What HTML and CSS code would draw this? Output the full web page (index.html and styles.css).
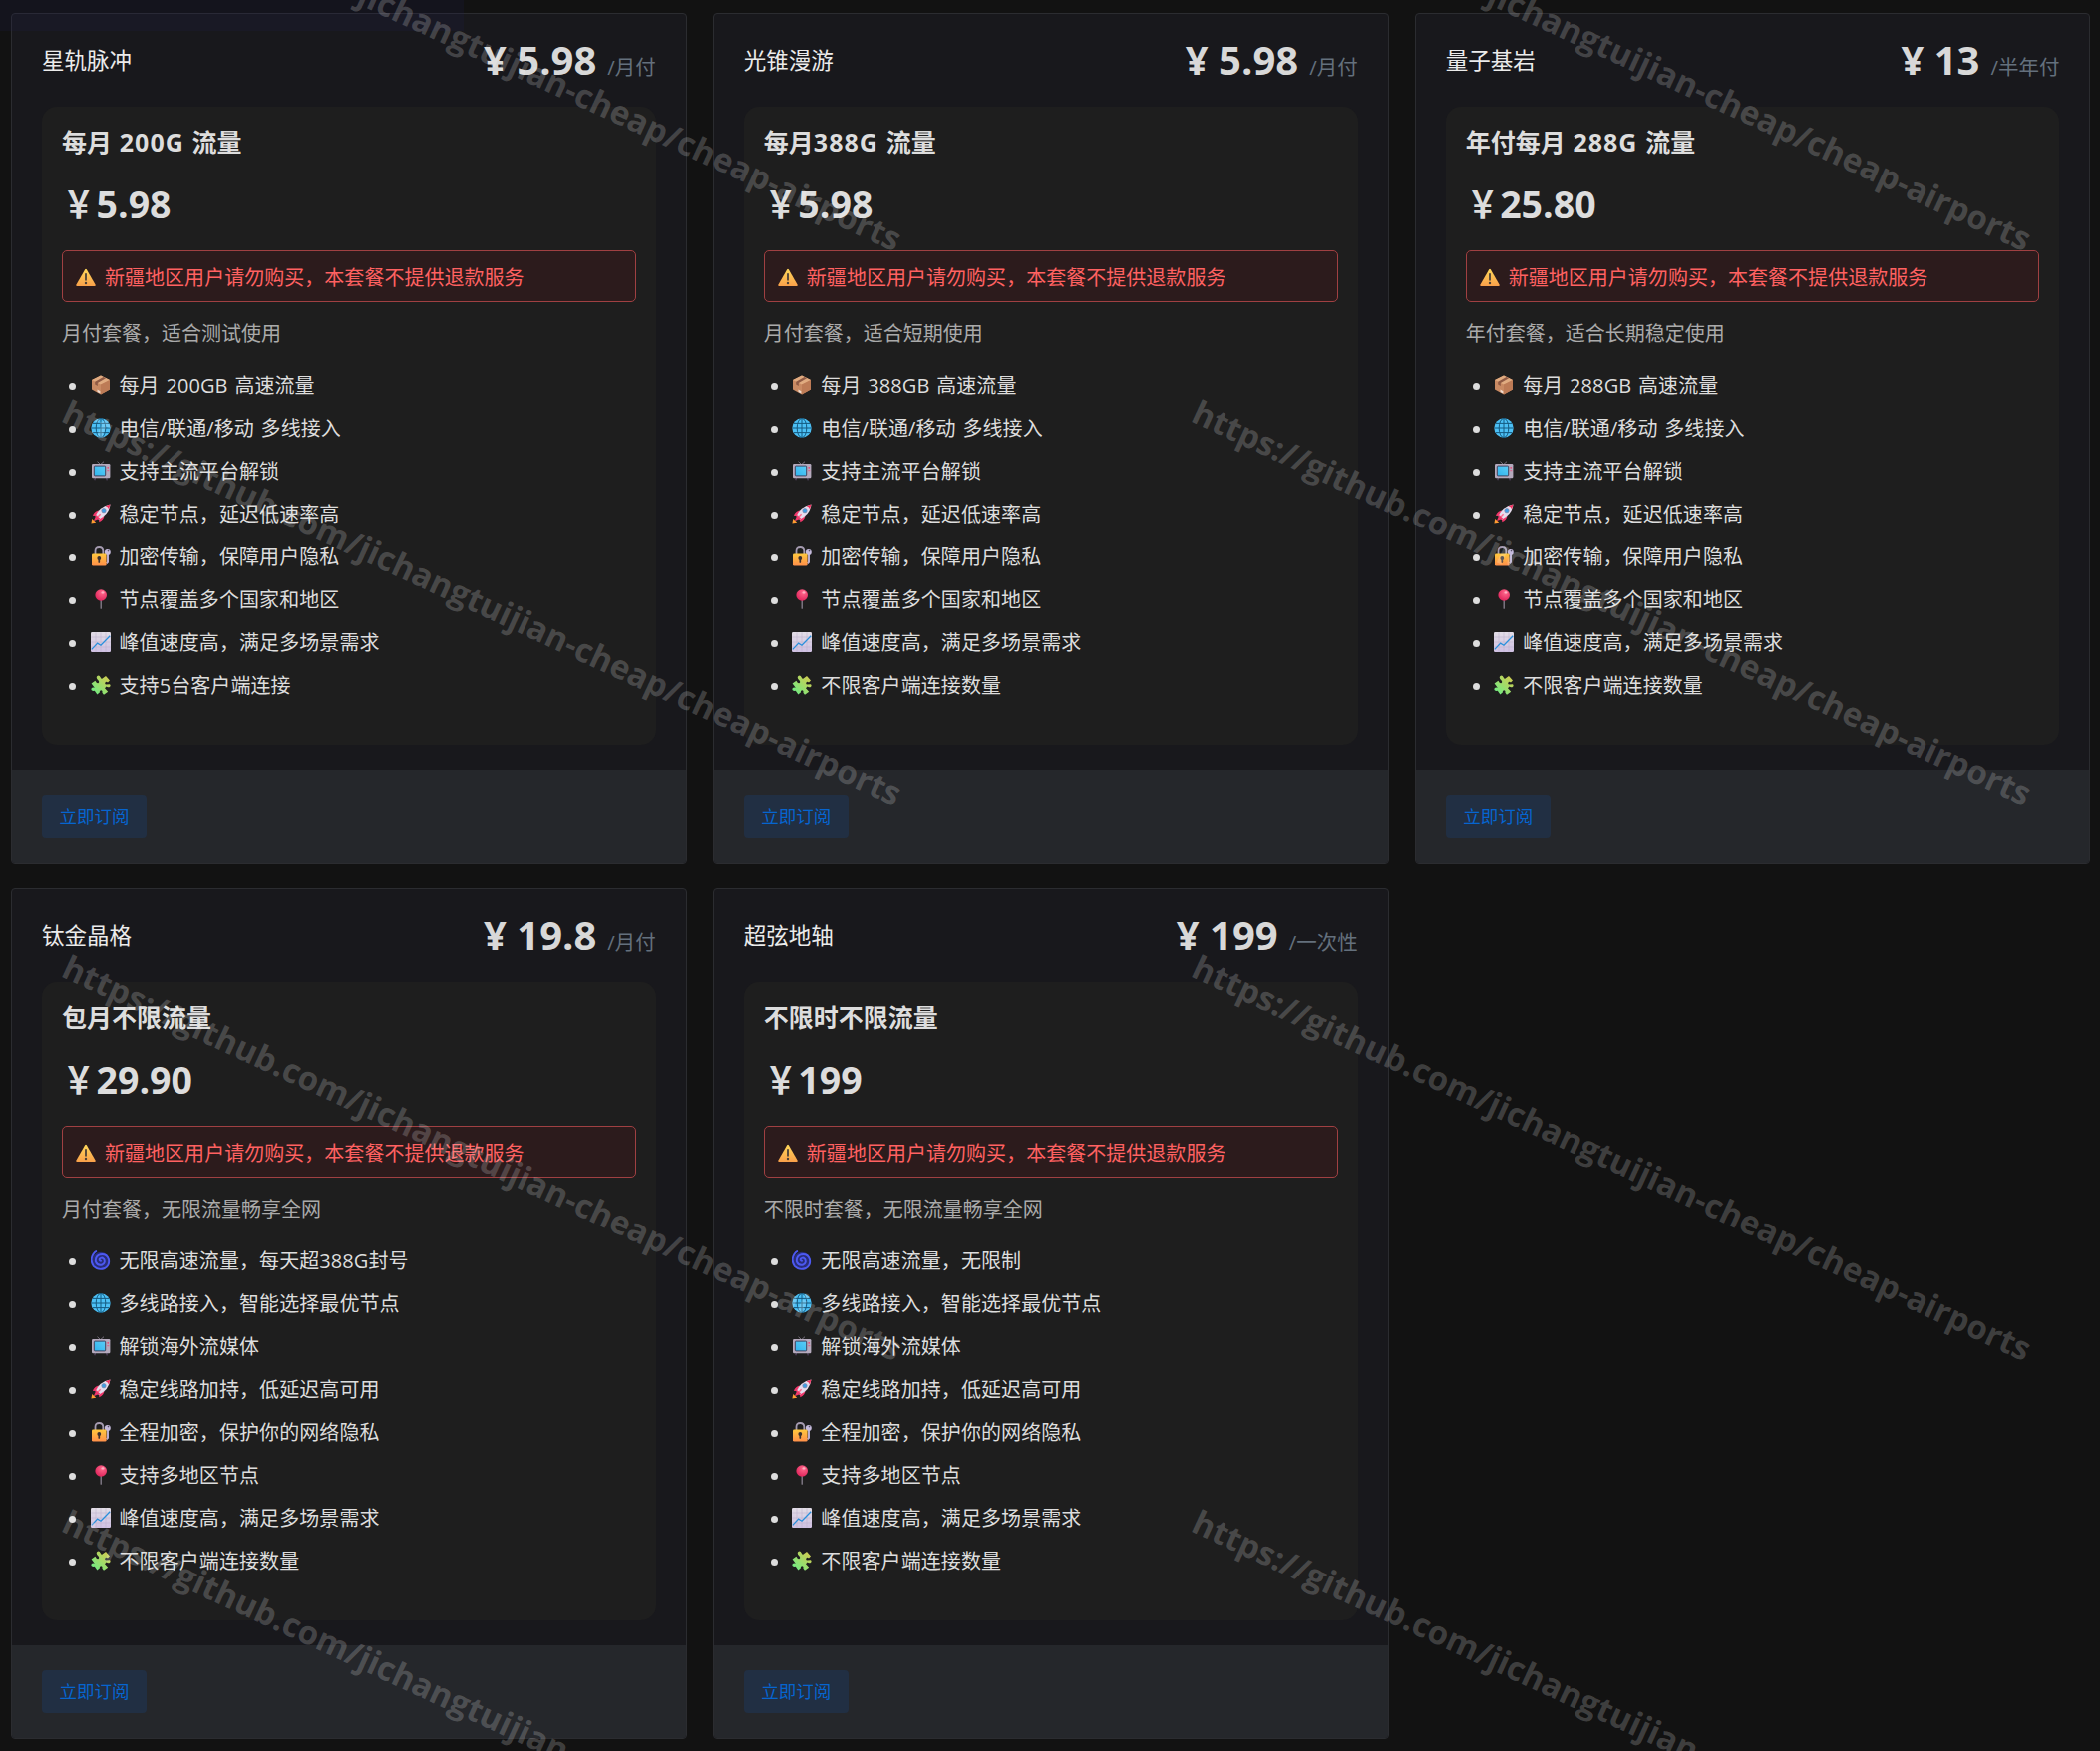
FILE: index.html
```html
<!DOCTYPE html>
<html lang="zh-CN">
<head>
<meta charset="utf-8">
<title>套餐</title>
<link rel="stylesheet" href="styles.css">
</head>
<body>
<svg class="defs" aria-hidden="true">
  <defs>
    <linearGradient id="gWarn" x1="0" y1="0" x2="0" y2="1"><stop offset="0" stop-color="#ffd85a"/><stop offset="1" stop-color="#f9a04a"/></linearGradient>
    <linearGradient id="gLock" x1="0" y1="0" x2="0" y2="1"><stop offset="0" stop-color="#ffc83d"/><stop offset="1" stop-color="#ff8f4a"/></linearGradient>
    <linearGradient id="gPuz" x1="0" y1="1" x2="1" y2="0"><stop offset="0" stop-color="#63f08a"/><stop offset="1" stop-color="#dcc84a"/></linearGradient>
    <linearGradient id="gTv" x1="0" y1="1" x2="1" y2="0"><stop offset="0" stop-color="#2fb4ee"/><stop offset="1" stop-color="#5ccdf6"/></linearGradient>
    <radialGradient id="gPin" cx=".6" cy=".3" r=".7"><stop offset="0" stop-color="#ff6a8d"/><stop offset="1" stop-color="#e0255c"/></radialGradient>
    <linearGradient id="gChart" x1="0" y1="0" x2="0" y2="1"><stop offset="0" stop-color="#e2dde6"/><stop offset="1" stop-color="#cfc0e2"/></linearGradient>
  </defs>
  <symbol id="warn" viewBox="0 0 20 20"><path d="M9.2 2.3Q10 1.1 10.8 2.3L19.7 17.8Q20 19 18.8 19H1.2Q0 19 .3 17.8Z" fill="url(#gWarn)"/><path d="M10 6.8V12.8" stroke="#4a4038" stroke-width="1.8" stroke-linecap="round"/><circle cx="10" cy="16" r="1.2" fill="#4a4038"/></symbol>
  <symbol id="box" viewBox="0 0 20 20"><path d="M10 .6L19 5V14.6L10 19.6L1 14.6V5Z" fill="#c98a63"/><path d="M10 .6L19 5L10 9.6L1 5Z" fill="#e0ab80"/><path d="M10 9.6L19 5V14.6L10 19.6Z" fill="#bd7b56"/><path d="M12.6 2L15 3.2L6.8 8V11L4.2 9.6V6.7Z" fill="#8f5a44"/><path d="M6.5 14.6L9.4 16.2V18.6L6.5 17Z" fill="#f0dcd0"/></symbol>
  <symbol id="globe" viewBox="0 0 20 20"><circle cx="10" cy="10" r="9.7" fill="#4cc0f5"/><g fill="none" stroke="#155a80" stroke-width="1"><ellipse cx="10" cy="10" rx="4.8" ry="9.6"/><path d="M10 .4V19.6M.4 10H19.6M2 5.4H18M2 14.6H18"/></g></symbol>
  <symbol id="tv" viewBox="0 0 20 20"><path d="M6.5 .7L9.6 3.6L13 .7" fill="none" stroke="#77717d" stroke-width="1"/><path d="M4.6 16.5L3.8 19.3M15.6 16.5L16.3 19.3" stroke="#51405f" stroke-width="1.3"/><rect x="1" y="3" width="18.4" height="14.2" rx="1.2" fill="#b5aabd"/><rect x="3.3" y="5.1" width="11.4" height="9.8" rx=".8" fill="url(#gTv)" stroke="#3b3550" stroke-width=".9"/><circle cx="17.2" cy="6.8" r=".9" fill="#e84a78"/><path d="M16.3 9.7H18.3" stroke="#e84a78" stroke-width=".8"/></symbol>
  <symbol id="rocket" viewBox="0 0 20 20"><path d="M.4 19.5L1.3 15L5.2 18.7Z" fill="#ff9c32"/><path d="M8 6.6Q4.3 7 1.8 11.7L5.7 12.2ZM13.4 12Q13.2 15.8 8.4 18.3L7.8 14.2Z" fill="#f0386b"/><path d="M4.6 12.4Q8.3 2.7 19.5 .5Q18.2 11 7.8 15.8Z" fill="#e6dded"/><path d="M14.6 2.2L19.5 .5L18 5.4Q17.3 3 14.6 2.2Z" fill="#f2315f"/><path d="M5.5 11L9.2 14.7L3.2 17L3 16.8Z" fill="#f0386b"/><path d="M7 13L9.6 10.3" stroke="#ff6b8c" stroke-width="1.4"/><circle cx="13" cy="6.7" r="2.2" fill="#3f9fe4" stroke="#8c86a5" stroke-width=".7"/></symbol>
  <symbol id="lock" viewBox="0 0 20 20"><path d="M4.5 9V4.8Q4.5 1 8.4 1Q12.3 1 12.3 4.8V9" fill="none" stroke="#a59bb0" stroke-width="1.8"/><path d="M17 7V15.8L15.6 17.4" fill="none" stroke="#b8add0" stroke-width="2"/><circle cx="16.8" cy="6" r="3" fill="#c5badc"/><circle cx="17.5" cy="4.6" r=".8" fill="#555064"/><rect x="1" y="7.6" width="14.6" height="12" rx="1.4" fill="url(#gLock)"/><circle cx="8.3" cy="12" r="1.9" fill="#3c3130"/><path d="M8.3 12V16" stroke="#3c3130" stroke-width="1.7" stroke-linecap="round"/></symbol>
  <symbol id="pin" viewBox="0 0 20 20"><path d="M10.2 11V19.2" stroke="#8a8290" stroke-width="1.3" stroke-linecap="round"/><circle cx="10.2" cy="6" r="5.8" fill="url(#gPin)"/><ellipse cx="12" cy="3.4" rx="1.5" ry="1.2" fill="#ffadc0"/></symbol>
  <symbol id="chart" viewBox="0 0 20 20"><rect width="20" height="20" rx="1.2" fill="url(#gChart)"/><path d="M5 .3V19.7M10 .3V19.7M15 .3V19.7M.3 5H19.7M.3 10H19.7M.3 15H19.7" stroke="#b9aec8" stroke-width=".5"/><path d="M.8 17.4L6.7 11.1L10 13.2L19.2 3.8" fill="none" stroke="#2890dc" stroke-width="1.3"/></symbol>
  <symbol id="puzzle" viewBox="0 0 20 20"><path d="M7.6 5.4Q4.6 2.7 6.4 1Q8.4-.3 9.9 2.7L10.9 4L15 1L19 5.6L17 7.5Q15.5 6.2 14.5 7.4Q13.7 8.7 15 9.6L19 9.2Q20.5 11.2 18.4 12.2Q16.5 12.6 15.6 11.5L14 13.2L17.2 16.7L13 19.8L11.4 17.8Q12 15.8 10.3 15.3Q8.4 15.5 9 17.3L6.4 19.5L3.8 15.8Q.6 16.4.3 14.2Q.6 12 3.8 12.8L.6 8.5L4.4 5.8Q6.2 9.2 7.7 8.1Q8.7 7 7.6 5.4Z" fill="url(#gPuz)"/></symbol>
  <symbol id="cyclone" viewBox="0 0 20 20"><circle cx="10" cy="10.3" r="8.6" fill="#282d78"/><path d="M10 10.7Q8.2 10.5 8.8 8.7Q10.6 6.5 13 8.6Q15.2 12.4 11.4 14.5Q6.6 15.8 4.9 11.4Q4.2 6 9.5 4.2Q15.6 3 17.9 8.8Q19.3 14.9 14 18Q7.5 20.6 2.6 15.6Q-1.2 9.6 2.5 3.8Q4 1.6 5.2 1.1" fill="none" stroke="#4d59f2" stroke-width="1.9" stroke-linecap="round"/></symbol>
</svg>

<main class="plans">
  <section class="card">
    <header class="card-head"><h3 class="name">星轨脉冲</h3><div class="price">¥ 5.98<span class="cycle">/月付</span></div></header>
    <div class="detail">
      <h4 class="quota">每月 <span class="num">200G</span> 流量</h4>
      <div class="amount"><span class="yen">￥</span>5.98</div>
      <div class="alert"><svg class="emoji"><use href="#warn"/></svg>新疆地区用户请勿购买，本套餐不提供退款服务</div>
      <p class="desc">月付套餐，适合测试使用</p>
      <ul class="features">
        <li><svg class="emoji"><use href="#box"/></svg>每月 200GB 高速流量</li>
        <li><svg class="emoji"><use href="#globe"/></svg>电信/联通/移动 多线接入</li>
        <li><svg class="emoji"><use href="#tv"/></svg>支持主流平台解锁</li>
        <li><svg class="emoji"><use href="#rocket"/></svg>稳定节点，延迟低速率高</li>
        <li><svg class="emoji"><use href="#lock"/></svg>加密传输，保障用户隐私</li>
        <li><svg class="emoji"><use href="#pin"/></svg>节点覆盖多个国家和地区</li>
        <li><svg class="emoji"><use href="#chart"/></svg>峰值速度高，满足多场景需求</li>
        <li><svg class="emoji"><use href="#puzzle"/></svg>支持5台客户端连接</li>
      </ul>
    </div>
    <footer class="card-foot"><button class="btn">立即订阅</button></footer>
  </section>

  <section class="card">
    <header class="card-head"><h3 class="name">光锥漫游</h3><div class="price">¥ 5.98<span class="cycle">/月付</span></div></header>
    <div class="detail">
      <h4 class="quota">每月<span class="num">388G</span> 流量</h4>
      <div class="amount"><span class="yen">￥</span>5.98</div>
      <div class="alert"><svg class="emoji"><use href="#warn"/></svg>新疆地区用户请勿购买，本套餐不提供退款服务</div>
      <p class="desc">月付套餐，适合短期使用</p>
      <ul class="features">
        <li><svg class="emoji"><use href="#box"/></svg>每月 388GB 高速流量</li>
        <li><svg class="emoji"><use href="#globe"/></svg>电信/联通/移动 多线接入</li>
        <li><svg class="emoji"><use href="#tv"/></svg>支持主流平台解锁</li>
        <li><svg class="emoji"><use href="#rocket"/></svg>稳定节点，延迟低速率高</li>
        <li><svg class="emoji"><use href="#lock"/></svg>加密传输，保障用户隐私</li>
        <li><svg class="emoji"><use href="#pin"/></svg>节点覆盖多个国家和地区</li>
        <li><svg class="emoji"><use href="#chart"/></svg>峰值速度高，满足多场景需求</li>
        <li><svg class="emoji"><use href="#puzzle"/></svg>不限客户端连接数量</li>
      </ul>
    </div>
    <footer class="card-foot"><button class="btn">立即订阅</button></footer>
  </section>

  <section class="card">
    <header class="card-head"><h3 class="name">量子基岩</h3><div class="price">¥ 13<span class="cycle">/半年付</span></div></header>
    <div class="detail">
      <h4 class="quota">年付每月 <span class="num">288G</span> 流量</h4>
      <div class="amount"><span class="yen">￥</span>25.80</div>
      <div class="alert"><svg class="emoji"><use href="#warn"/></svg>新疆地区用户请勿购买，本套餐不提供退款服务</div>
      <p class="desc">年付套餐，适合长期稳定使用</p>
      <ul class="features">
        <li><svg class="emoji"><use href="#box"/></svg>每月 288GB 高速流量</li>
        <li><svg class="emoji"><use href="#globe"/></svg>电信/联通/移动 多线接入</li>
        <li><svg class="emoji"><use href="#tv"/></svg>支持主流平台解锁</li>
        <li><svg class="emoji"><use href="#rocket"/></svg>稳定节点，延迟低速率高</li>
        <li><svg class="emoji"><use href="#lock"/></svg>加密传输，保障用户隐私</li>
        <li><svg class="emoji"><use href="#pin"/></svg>节点覆盖多个国家和地区</li>
        <li><svg class="emoji"><use href="#chart"/></svg>峰值速度高，满足多场景需求</li>
        <li><svg class="emoji"><use href="#puzzle"/></svg>不限客户端连接数量</li>
      </ul>
    </div>
    <footer class="card-foot"><button class="btn">立即订阅</button></footer>
  </section>

  <section class="card">
    <header class="card-head"><h3 class="name">钛金晶格</h3><div class="price">¥ 19.8<span class="cycle">/月付</span></div></header>
    <div class="detail">
      <h4 class="quota">包月不限流量</h4>
      <div class="amount"><span class="yen">￥</span>29.90</div>
      <div class="alert"><svg class="emoji"><use href="#warn"/></svg>新疆地区用户请勿购买，本套餐不提供退款服务</div>
      <p class="desc">月付套餐，无限流量畅享全网</p>
      <ul class="features">
        <li><svg class="emoji"><use href="#cyclone"/></svg>无限高速流量，每天超388G封号</li>
        <li><svg class="emoji"><use href="#globe"/></svg>多线路接入，智能选择最优节点</li>
        <li><svg class="emoji"><use href="#tv"/></svg>解锁海外流媒体</li>
        <li><svg class="emoji"><use href="#rocket"/></svg>稳定线路加持，低延迟高可用</li>
        <li><svg class="emoji"><use href="#lock"/></svg>全程加密，保护你的网络隐私</li>
        <li><svg class="emoji"><use href="#pin"/></svg>支持多地区节点</li>
        <li><svg class="emoji"><use href="#chart"/></svg>峰值速度高，满足多场景需求</li>
        <li><svg class="emoji"><use href="#puzzle"/></svg>不限客户端连接数量</li>
      </ul>
    </div>
    <footer class="card-foot"><button class="btn">立即订阅</button></footer>
  </section>

  <section class="card">
    <header class="card-head"><h3 class="name">超弦地轴</h3><div class="price">¥ 199<span class="cycle">/一次性</span></div></header>
    <div class="detail">
      <h4 class="quota">不限时不限流量</h4>
      <div class="amount"><span class="yen">￥</span>199</div>
      <div class="alert"><svg class="emoji"><use href="#warn"/></svg>新疆地区用户请勿购买，本套餐不提供退款服务</div>
      <p class="desc">不限时套餐，无限流量畅享全网</p>
      <ul class="features">
        <li><svg class="emoji"><use href="#cyclone"/></svg>无限高速流量，无限制</li>
        <li><svg class="emoji"><use href="#globe"/></svg>多线路接入，智能选择最优节点</li>
        <li><svg class="emoji"><use href="#tv"/></svg>解锁海外流媒体</li>
        <li><svg class="emoji"><use href="#rocket"/></svg>稳定线路加持，低延迟高可用</li>
        <li><svg class="emoji"><use href="#lock"/></svg>全程加密，保护你的网络隐私</li>
        <li><svg class="emoji"><use href="#pin"/></svg>支持多地区节点</li>
        <li><svg class="emoji"><use href="#chart"/></svg>峰值速度高，满足多场景需求</li>
        <li><svg class="emoji"><use href="#puzzle"/></svg>不限客户端连接数量</li>
      </ul>
    </div>
    <footer class="card-foot"><button class="btn">立即订阅</button></footer>
  </section>
</main>

<div class="tint"></div>
<svg class="watermark" viewBox="0 0 2106 1756">
  <g class="mark">
    <text transform="translate(60 422) rotate(24.8)" textLength="922">https://github.com/jichangtuijian-cheap/cheap-airports</text>
    <text transform="translate(60 979) rotate(24.8)" textLength="922">https://github.com/jichangtuijian-cheap/cheap-airports</text>
    <text transform="translate(60 1535) rotate(24.8)" textLength="922">https://github.com/jichangtuijian-cheap/cheap-airports</text>
    <text transform="translate(60 -134) rotate(24.8)" textLength="922">https://github.com/jichangtuijian-cheap/cheap-airports</text>
    <text transform="translate(1193 -134) rotate(24.8)" textLength="922">https://github.com/jichangtuijian-cheap/cheap-airports</text>
    <text transform="translate(1193 422) rotate(24.8)" textLength="922">https://github.com/jichangtuijian-cheap/cheap-airports</text>
    <text transform="translate(1193 979) rotate(24.8)" textLength="922">https://github.com/jichangtuijian-cheap/cheap-airports</text>
    <text transform="translate(1193 1535) rotate(24.8)" textLength="922">https://github.com/jichangtuijian-cheap/cheap-airports</text>
  </g>
</svg>
</body>
</html>
```
FILE: styles.css
```css
* { box-sizing: border-box; }

body {
  margin: 0;
  height: 1756px;
  overflow: hidden;
  background: #121212;
  color: #ddd;
  font-family: "Open Sans", "Noto Sans CJK SC", sans-serif;
  font-size: 20px;
}

h3, h4, p, ul { margin: 0; padding: 0; }

.defs { position: absolute; width: 0; height: 0; }

.plans {
  display: grid;
  grid-template-columns: repeat(3, 1fr);
  gap: 25px 26px;
  padding: 13px 9.5px 0 11px;
}

.card {
  display: flex;
  flex-direction: column;
  height: 853px;
  border: 1px solid #2b2c30;
  border-radius: 4px;
  background: #18181c;
  overflow: hidden;
}

.card-head {
  display: flex;
  align-items: center;
  justify-content: space-between;
  height: 93px;
  padding: 0 30px;
}

.name {
  padding-top: 1px;
  color: #ebebeb;
  font-size: 22.5px;
  font-weight: 400;
  line-height: 30px;
}

.price {
  padding-top: 5px;
  color: #d8d8d8;
  font-size: 40px;
  font-weight: 700;
  line-height: 50px;
  white-space: nowrap;
}

.cycle {
  margin-left: 11px;
  color: #64707d;
  font-size: 20.5px;
  font-weight: 400;
}

.detail {
  height: 640px;
  margin: 0 30px 25px;
  padding: 19px 20px 20px;
  border-radius: 15px;
  background: #1e1e1e;
}

.quota {
  font-size: 25px;
  font-weight: 700;
  line-height: 32px;
  word-spacing: 1.3px;
}

.num { letter-spacing: 1px; }

.amount {
  margin-top: 22px;
  font-size: 37.5px;
  font-weight: 700;
  line-height: 50px;
}

.yen {
  display: inline-block;
  margin-right: -3px;
  transform: scaleX(.84);
  transform-origin: 6px 50%;
}

.alert {
  display: flex;
  align-items: center;
  height: 52px;
  margin-top: 21px;
  padding: 0 13px;
  border: 1px solid #a04042;
  border-radius: 5px;
  background: #2c1b1c;
  color: #ff6161;
  letter-spacing: .03px;
}

.emoji {
  flex: none;
  width: 20px;
  height: 20px;
  margin-right: 9px;
}

.alert .emoji { margin-top: 2px; }

.desc {
  margin-top: 17px;
  color: #aaa;
  line-height: 30px;
}

.features {
  margin-top: 14px;
  list-style: none;
}

.features li {
  display: flex;
  align-items: center;
  height: 43px;
  padding-left: 7px;
  white-space: pre;
  letter-spacing: .08px;
  word-spacing: 1.5px;
}

.features li::before {
  content: "";
  width: 7px;
  height: 7px;
  margin-top: 3px;
  margin-right: 14.5px;
  border-radius: 50%;
  background: #ddd;
}

.card-foot {
  flex: 1;
  padding: 25px 30px 0;
  background: #25272b;
}

.btn {
  display: block;
  width: 105px;
  height: 43px;
  padding: 0 0 2px;
  border: 0;
  border-radius: 4px;
  background: #212f43;
  color: #0665d0;
  font: 17.5px "Open Sans", "Noto Sans CJK SC", sans-serif;
}

.tint {
  position: absolute;
  top: 0;
  left: 0;
  width: 465px;
  height: 31px;
  background: rgba(28, 32, 90, .16);
}

.watermark {
  position: absolute;
  top: 0;
  left: 0;
  width: 2106px;
  height: 1756px;
  pointer-events: none;
}

.mark {
  fill: #fff;
  fill-opacity: .2;
  font-size: 33px;
  font-weight: 700;
}
```
